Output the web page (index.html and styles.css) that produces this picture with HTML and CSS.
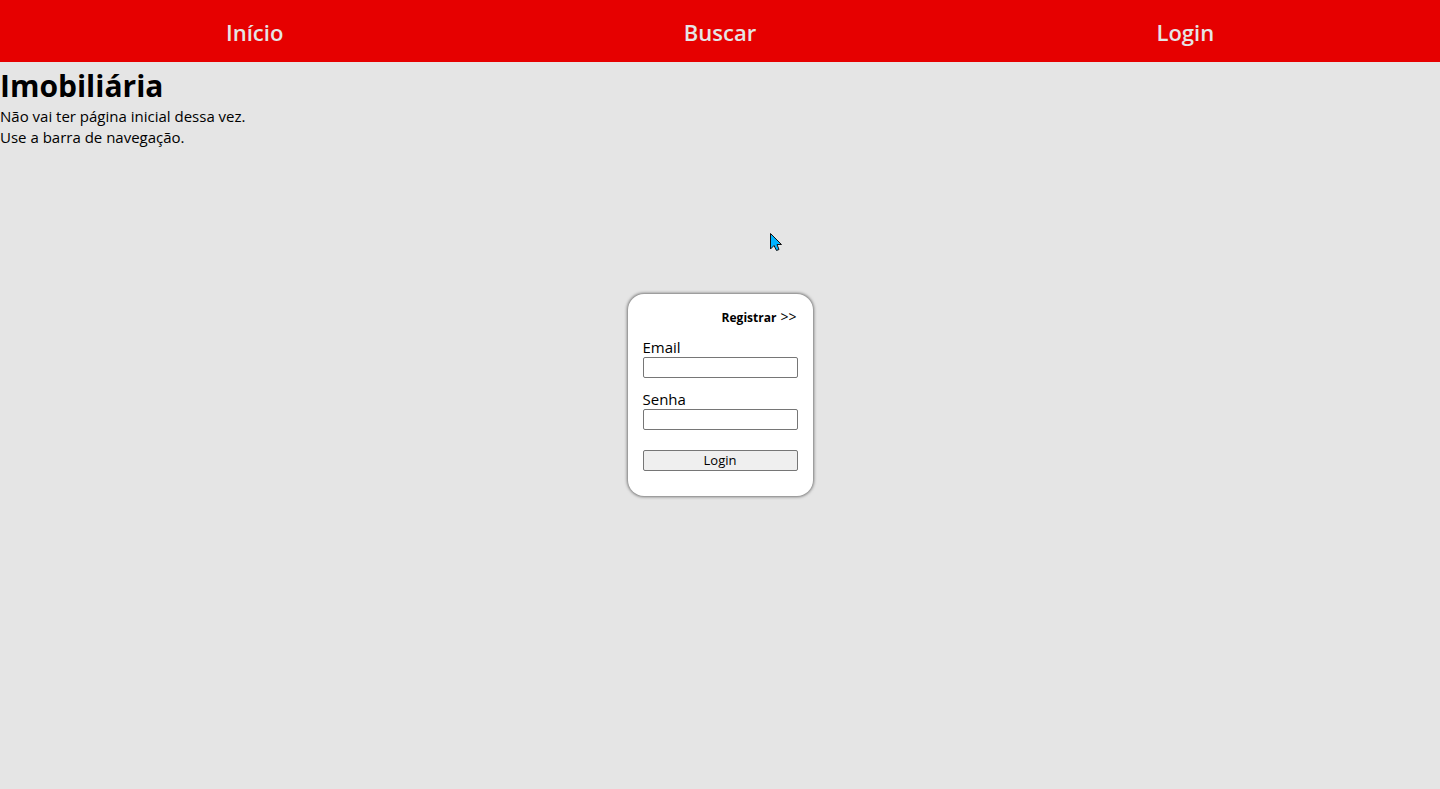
FILE: index.html
```html
<!DOCTYPE html>
<html lang="pt-BR">
<head>
<meta charset="utf-8">
<meta name="viewport" content="width=device-width, initial-scale=1">
<title>Imobiliária</title>
<link rel="stylesheet" href="styles.css">
</head>
<body>
<nav class="navbar">
  <a href="#inicio">Início</a>
  <a href="#buscar">Buscar</a>
  <a href="#login">Login</a>
</nav>
<main class="intro">
  <h1>Imobiliária</h1>
  <p>Não vai ter página inicial dessa vez.</p>
  <p>Use a barra de navegação.</p>
</main>
<div class="overlay">
  <form class="card">
    <a class="switch" href="#registrar">Registrar <span class="arrows">&gt;&gt;</span></a>
    <div class="field">
      <label for="email">Email</label>
      <input id="email" type="email">
    </div>
    <div class="field">
      <label for="senha">Senha</label>
      <input id="senha" type="password">
    </div>
    <button type="submit">Login</button>
  </form>
</div>
<svg class="cursor" width="15" height="21" viewBox="0 0 15 21" aria-hidden="true">
  <path d="M1.5 1.5V17L5 13.5L7.5 18.5L10 17.5L8 12.5H12.5Z"/>
</svg>
</body>
</html>
```
FILE: styles.css
```css
* {
  box-sizing: border-box;
  margin: 0;
  padding: 0;
}

body {
  min-height: 100vh;
  background: #e5e5e5;
  color: #000;
  font: 15px/21px "Segoe UI", "Open Sans", "Noto Sans", sans-serif;
}

.navbar {
  display: grid;
  grid-template-columns: 1fr 1fr 1fr;
  justify-items: center;
  width: 100%;
  padding: 0 22px;
  background: #e60000;
}

.navbar a {
  padding: 17px 16px 15px;
  color: #e5e5e5;
  font-size: 22px;
  line-height: 30px;
  font-weight: 600;
  text-decoration: none;
}

.intro h1 {
  padding-top: 4px;
  font-size: 30px;
  line-height: 40px;
  font-weight: 700;
}

.overlay {
  position: absolute;
  inset: 0;
  display: flex;
  align-items: center;
  justify-content: center;
  pointer-events: none;
}

.card {
  display: flex;
  flex-direction: column;
  padding: 15px 15px 25px;
  border-radius: 16px;
  background: #fff;
  box-shadow: 0 0 3px 1px #777;
  pointer-events: auto;
}

.switch {
  align-self: flex-end;
  margin-bottom: 11px;
  color: #000;
  font-size: 12px;
  line-height: 18px;
  font-weight: 700;
  text-decoration: none;
}

.arrows {
  padding: 0 1px;
  font-size: 14px;
  line-height: 1;
  font-weight: 500;
}

.field {
  display: flex;
  flex-direction: column;
  margin-bottom: 12px;
}

.field label {
  line-height: 19px;
}

.field input {
  width: 155px;
  height: 21px;
  padding: 1px 2px;
  border: 1px solid #767676;
  border-radius: 2px;
  background: #fff;
}

.card button {
  height: 21px;
  margin-top: 8px;
  border: 1px solid #767676;
  border-radius: 2px;
  background: #efefef;
  color: #000;
  font-family: inherit;
  font-size: 13px;
  line-height: 18px;
}

.cursor {
  position: absolute;
  top: 232px;
  left: 769px;
  fill: #00b4ff;
  stroke: #111;
  stroke-width: 1;
  pointer-events: none;
}
```
